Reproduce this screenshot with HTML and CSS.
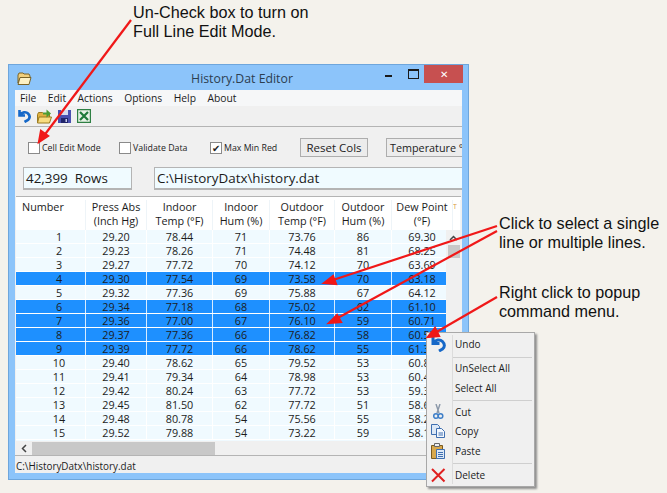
FILE: index.html
```html
<!DOCTYPE html>
<html lang="en">
<head>
<meta charset="utf-8">
<title>History.Dat Editor</title>
<link rel="stylesheet" href="styles.css">
</head>
<body>
<div class="canvas">
  <p class="note note-top">Un-Check box to turn on<br>Full Line Edit Mode.</p>
  <p class="note note-select">Click to select a single<br>line or multiple lines.</p>
  <p class="note note-right">Right click to popup<br>command menu.</p>

  <section class="window">
    <header class="titlebar">
      <svg class="title-icon" width="15" height="13" viewBox="0 0 15 13"><path d="M1 3l1-2h4l1 1h5l1 2v2H3L1 11z" fill="#f0cf7c" stroke="#7a6428"/><path d="M3 5.500h11l-2 7H1z" fill="#fdf1c4" stroke="#7a6428"/></svg>
      <h1 class="title">History.Dat Editor</h1>
      <div class="controls">
        <span class="ctl ctl-min"></span>
        <span class="ctl ctl-max"></span>
        <span class="ctl-close">✕</span>
      </div>
    </header>
    <div class="client">
      <nav class="menubar"><span>File</span><span>Edit</span><span>Actions</span><span>Options</span><span>Help</span><span>About</span></nav>
      <div class="toolbar">
        <svg width="14" height="14" viewBox="0 0 14 14"><path d="M2.500 1v5.500H8M3 6C5 3 9 2.500 11 4.500S13 9 11 11L7.500 13" fill="none" stroke="#1668c8" stroke-width="2.600"/></svg>
        <svg width="15" height="15" viewBox="0 0 15 15"><path d="M.5 5.500l1-2h4l1 1h6v9H.5z" fill="#e0b040" stroke="#9a7a20"/><path d="M2 8h12.500l-2 6H.5z" fill="#f8dc80" stroke="#9a7a20"/><path d="M6 3.500h3.500V.5L14 4.500 9.500 8.500V5.500H6z" fill="#4c9c34"/></svg>
        <svg width="13" height="13" viewBox="0 0 13 13"><path d="M0 0h13v13H0z" fill="#4a50b0"/><path d="M3 0h7v5H3z" fill="#d8dcf0"/><path d="M3 8h7v5H3z" fill="#20246a"/><path d="M7.500 9h1.500v3H7.500z" fill="#c8ccec"/></svg>
        <svg width="14" height="14" viewBox="0 0 14 14"><path d="M.5.500h13v13H.5z" fill="#e8f2e6" stroke="#2f8044" stroke-width="1.400"/><path d="M3 3l8 8M11 3l-8 8" stroke="#1f7a3a" stroke-width="2.200"/></svg>
      </div>
      <div class="options">
        <label class="check check-a"><span class="box"></span>Cell Edit Mode</label>
        <label class="check check-b"><span class="box"></span>Validate Data</label>
        <label class="check check-c"><span class="box">✔</span>Max Min Red</label>
        <button class="btn btn-reset">Reset Cols</button>
        <button class="btn btn-temp">Temperature °F</button>
      </div>
      <div class="fields">
        <div class="field field-rows">42,399&nbsp; Rows</div>
        <div class="field field-path">C:\HistoryDatx\history.dat</div>
      </div>
      <div class="grid">
        <div class="row head">
          <div class="first">Number</div><div>Press Abs<br>(Inch Hg)</div><div>Indoor<br>Temp (°F)</div><div>Indoor<br>Hum (%)</div><div>Outdoor<br>Temp (°F)</div><div>Outdoor<br>Hum (%)</div><div>Dew Point<br>(°F)</div><div class="next">T</div>
        </div>
        <div class="body">
          <div class="rows">
            <div class="row"><div class="num">1</div><div>29.20</div><div>78.44</div><div>71</div><div>73.76</div><div>86</div><div>69.30</div></div>
            <div class="row"><div class="num">2</div><div>29.23</div><div>78.26</div><div>71</div><div>74.48</div><div>81</div><div>68.25</div></div>
            <div class="row"><div class="num">3</div><div>29.27</div><div>77.72</div><div>70</div><div>74.12</div><div>70</div><div>63.69</div></div>
            <div class="row sel"><div class="num">4</div><div>29.30</div><div>77.54</div><div>69</div><div>73.58</div><div>70</div><div>63.18</div></div>
            <div class="row"><div class="num">5</div><div>29.32</div><div>77.36</div><div>69</div><div>75.88</div><div>67</div><div>64.12</div></div>
            <div class="row sel"><div class="num">6</div><div>29.34</div><div>77.18</div><div>68</div><div>75.02</div><div>62</div><div>61.10</div></div>
            <div class="row sel"><div class="num">7</div><div>29.36</div><div>77.00</div><div>67</div><div>76.10</div><div>59</div><div>60.71</div></div>
            <div class="row sel"><div class="num">8</div><div>29.37</div><div>77.36</div><div>66</div><div>76.82</div><div>58</div><div>60.52</div></div>
            <div class="row sel"><div class="num">9</div><div>29.39</div><div>77.72</div><div>66</div><div>78.62</div><div>55</div><div>61.34</div></div>
            <div class="row"><div class="num">10</div><div>29.40</div><div>78.62</div><div>65</div><div>79.52</div><div>53</div><div>60.86</div></div>
            <div class="row"><div class="num">11</div><div>29.41</div><div>79.34</div><div>64</div><div>78.98</div><div>53</div><div>60.44</div></div>
            <div class="row"><div class="num">12</div><div>29.42</div><div>80.24</div><div>63</div><div>77.72</div><div>53</div><div>59.36</div></div>
            <div class="row"><div class="num">13</div><div>29.45</div><div>81.50</div><div>62</div><div>77.72</div><div>51</div><div>58.64</div></div>
            <div class="row"><div class="num">14</div><div>29.48</div><div>80.78</div><div>54</div><div>75.56</div><div>55</div><div>58.28</div></div>
            <div class="row"><div class="num">15</div><div>29.52</div><div>79.88</div><div>54</div><div>73.22</div><div>59</div><div>58.10</div></div>
          </div>
          <div class="vscroll">
            <svg class="up" width="9" height="6" viewBox="0 0 9 6"><path d="M1 5l3.500-3.500L8 5" fill="none" stroke="#444" stroke-width="1.500"/></svg>
            <div class="vthumb"></div>
          </div>
        </div>
        <div class="hscroll">
          <svg width="6" height="9" viewBox="0 0 6 9"><path d="M5 1L1.500 4.500 5 8" fill="none" stroke="#444" stroke-width="1.500"/></svg>
          <div class="hthumb"></div>
        </div>
      </div>
      <footer class="status">C:\HistoryDatx\history.dat</footer>
    </div>
  </section>

  <aside class="menu">
    <div class="item"><svg class="ico" width="16" height="16" viewBox="0 0 16 16"><path d="M3 1v6.500h6.500M3.500 7C5.500 3.500 10 3 12.500 5.500S15 11 12.500 13L9 15" fill="none" stroke="#1668c8" stroke-width="3"/></svg>Undo</div>
    <hr class="sep">
    <div class="item">UnSelect All</div>
    <div class="item">Select All</div>
    <hr class="sep">
    <div class="item"><svg class="ico" width="16" height="16" viewBox="0 0 16 16"><path d="M6 0l3 9M10 0L7 9" stroke="#8a97a8" stroke-width="1.400"/><circle cx="6" cy="12" r="2.300" fill="none" stroke="#3f7fc8" stroke-width="1.500"/><circle cx="10.500" cy="12" r="2.300" fill="none" stroke="#3f7fc8" stroke-width="1.500"/></svg>Cut</div>
    <div class="item"><svg class="ico" width="16" height="16" viewBox="0 0 16 16"><path d="M1.500 1.500h6l2 2v8h-8z" fill="#dce8f6" stroke="#3f6fb0"/><path d="M6.500 5.500h5l3 3v6h-8z" fill="#f4f8fd" stroke="#3f6fb0"/><path d="M8.500 10h4.500M8.500 12h4.500" stroke="#3f6fb0"/></svg>Copy</div>
    <div class="item"><svg class="ico" width="16" height="16" viewBox="0 0 16 16"><path d="M1.500 2.500h11v13h-11z" fill="#d8a84c" stroke="#7a5a20"/><path d="M4.500.5h5v3h-5z" fill="#eee" stroke="#666"/><path d="M6.500 6.500h8v9h-8z" fill="#dce8f6" stroke="#3f6fb0"/><path d="M8 9.500h5M8 11.500h5M8 13.500h5" stroke="#3f6fb0"/></svg>Paste</div>
    <hr class="sep">
    <div class="item"><svg class="ico" width="16" height="16" viewBox="0 0 16 16"><path d="M2 2l12.500 12.500M14.500 2L2 14.500" stroke="#e02020" stroke-width="2"/></svg>Delete</div>
  </aside>

  <svg class="arrows" width="667" height="493" viewBox="0 0 667 493">
    <g stroke="#f01818" stroke-width="2.200" fill="#f01818">
      <path d="M131 20L43 137"/><path d="M39 142l2-11 7 5z"/>
      <path d="M497 226L330 281"/><path d="M324 283l9-7 3 8z"/>
      <path d="M497 231L334 320"/><path d="M329 323l8-8 4 7z"/>
      <path d="M497 297L433 334"/><path d="M428 337l7-9 4 8z"/>
    </g>
  </svg>
</div>
</body>
</html>
```
FILE: styles.css
```css
* { box-sizing: border-box; }
html, body { margin: 0; padding: 0; }
body { background: #f3f1ea; overflow: hidden; }
.canvas {
  position: relative;
  width: 667px;
  height: 493px;
  overflow: hidden;
  background: #f4f2ec;
  font-family: "Open Sans", "Noto Sans", sans-serif;
  color: #1c1c1c;
}
.note {
  position: absolute;
  margin: 0;
  font: 16.200px/19px "Liberation Sans", Arial, sans-serif;
  color: #111;
}
.note-top { left: 133px; top: 3px; }
.note-select { left: 499px; top: 214px; }
.note-right { left: 499px; top: 283px; }

.window {
  position: absolute;
  left: 8px;
  top: 64px;
  width: 461px;
  height: 416px;
  background: #8cc4fa;
  border: 1px solid #6ea6dc;
  display: flex;
  flex-direction: column;
  padding: 0 6px 6px;
}
.titlebar {
  height: 25px;
  flex: none;
  display: flex;
  align-items: center;
}
.title-icon { flex: none; margin: 2px 0 0 2px; }
.title {
  flex: 1;
  margin: 2px 0 0;
  padding-left: 74px;
  text-align: center;
  font-size: 12.300px;
  font-weight: 400;
  color: #2c3e50;
}
.controls { display: flex; align-items: flex-start; align-self: flex-start; margin-right: -1px; }
.ctl { height: 18px; position: relative; }
.ctl-min { width: 22px; }
.ctl-min::after { content: ""; position: absolute; left: 7px; top: 10px; width: 7px; height: 2px; background: #1a1a1a; }
.ctl-max { width: 24px; }
.ctl-max::after { content: ""; position: absolute; left: 8px; top: 4px; width: 9px; height: 7px; border: 1px solid #1a1a1a; border-top-width: 2px; }
.ctl-close {
  width: 39px;
  height: 18px;
  background: #c75050;
  color: #fff;
  font-size: 10px;
  line-height: 18px;
  text-align: center;
}
.client {
  flex: 1;
  min-height: 0;
  background: #f0f0f0;
  display: flex;
  flex-direction: column;
  overflow: hidden;
}
.menubar {
  height: 16px;
  flex: none;
  display: flex;
  gap: 11.500px;
  padding-left: 5px;
  background: #f6f7f8;
  font-size: 10.300px;
  line-height: 16px;
}
.toolbar {
  height: 21px;
  flex: none;
  display: flex;
  align-items: center;
  gap: 6px;
  padding-left: 2px;
  border-bottom: 1px solid #b4b4b4;
}
.options {
  height: 40px;
  flex: none;
  display: flex;
  align-items: center;
  padding-left: 13px;
  font-size: 8.800px;
  color: #222;
}
.check { display: flex; align-items: center; gap: 2px; margin-top: 1px; flex: none; }
.check-a { width: 91px; }
.check-b { width: 91px; }
.check-c { width: 90px; }
.box {
  width: 12px;
  height: 12px;
  background: #fff;
  border: 1px solid #8a8a8a;
  font-size: 10px;
  line-height: 10px;
  text-align: center;
}
.btn {
  height: 19px;
  padding: 0;
  background: #ececec;
  border: 1px solid #adadad;
  font: 11.500px "Open Sans", sans-serif;
  color: #222;
  white-space: nowrap;
  overflow: hidden;
  text-align: left;
  flex: none;
}
.btn-reset { width: 68px; text-align: center; }
.btn-temp { width: 77px; margin-left: 18px; padding-left: 3px; font-size: 10.800px; }
.fields {
  height: 23px;
  flex: none;
  display: flex;
  padding-left: 8px;
  gap: 22px;
  font-size: 13.400px;
}
.field {
  height: 23px;
  background: #f0fbff;
  border: 1px solid #b4b4b4;
  border-width: 1px 0 2px 1px;
  padding-left: 2px;
  line-height: 20px;
  color: #1a1a1a;
  white-space: nowrap;
}
.field-rows { width: 109px; border-right-width: 1px; }
.field-path { flex: 1; }
.grid {
  flex: none;
  margin: 6px 1px 0;
  border-top: 1px solid #b4b4b4;
  display: flex;
  flex-direction: column;
  background: #fff;
  font-size: 10.800px;
}
.row {
  display: grid;
  grid-template-columns: 70px 61px 66px 57px 65px 57px 61px 8px;
  height: 14px;
  line-height: 13px;
  text-align: center;
  white-space: nowrap;
  background: #f0faff;
  border-bottom: 1px solid #fff;
}
.row > div { border-right: 1px solid #fff; overflow: hidden; }
.row.sel { background: #1e90ff; }
.row.sel > div { border-right-color: #d8ecff; }
.num { padding-left: 17px; }
.row.head {
  height: 33px;
  background: #fff;
  padding-top: 3px;
  border-bottom: 0;
}
.row.head > div { border-right: 1px solid #eef4f8; line-height: 14px; }
.first { text-align: left; padding-left: 6px; }
.next { color: #d89a40; font-size: 7px; text-align: left; }
.body { display: flex; height: 211px; }
.rows { width: 430px; overflow: hidden; background: #f0faff; }
.vscroll {
  flex: 1;
  background: #f0f0f0;
  display: flex;
  flex-direction: column;
  align-items: center;
  padding-top: 5px;
}
.vthumb { width: 12px; height: 13px; margin-top: 4px; background: #c8c8c8; }
.hscroll {
  height: 14px;
  background: #f0f0f0;
  display: flex;
  align-items: center;
  padding-left: 5px;
  gap: 5px;
}
.hthumb { width: 183px; height: 13px; background: #c8c8c8; }
.status {
  flex: 1;
  min-height: 0;
  border-top: 1px solid #b4b4b4;
  font-size: 9.900px;
  line-height: 20px;
  padding-left: 1px;
  overflow: hidden;
}

.menu {
  position: absolute;
  left: 426px;
  top: 332px;
  width: 109px;
  height: 155px;
  background: #f0f0f0;
  border: 1px solid #a8a8a8;
  box-shadow: 2px 2px 2px #8f8f8f;
  display: flex;
  flex-direction: column;
  font-size: 10px;
  padding: 2px 0;
}
.menu::before {
  content: "";
  position: absolute;
  left: 25px;
  top: 2px;
  bottom: 2px;
  border-left: 1px solid #dcdcdc;
}
.item {
  height: 19.500px;
  line-height: 19.500px;
  padding-left: 28px;
  position: relative;
  flex: none;
}
.ico { position: absolute; left: 3px; top: 1px; }
.sep { margin: 2px 2px 1.500px 26px; border: 0; border-top: 1px solid #cfcfcf; height: 1px; flex: none; }
.arrows { position: absolute; left: 0; top: 0; pointer-events: none; }
```
